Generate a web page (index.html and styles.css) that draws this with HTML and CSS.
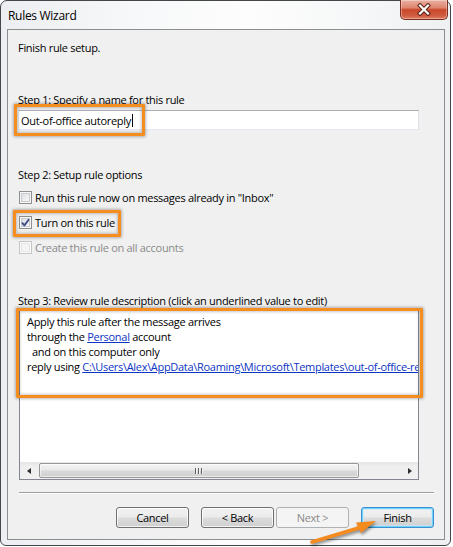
FILE: index.html
```html
<!DOCTYPE html>
<html>
<head>
<meta charset="utf-8">
<title>Rules Wizard</title>
<link rel="stylesheet" href="styles.css">
</head>
<body>
<div class="window">
  <div class="titlebar">
    <span class="title">Rules Wizard</span>
    <div class="close">
      <svg width="18" height="13" viewBox="0 0 18 13">
        <path d="M5 2.5 L13 10.5 M13 2.5 L5 10.5" stroke="#5b2418" stroke-width="4.2" stroke-linecap="square" fill="none"/>
        <path d="M5 2.5 L13 10.5 M13 2.5 L5 10.5" stroke="#ffffff" stroke-width="2.2" stroke-linecap="square" fill="none"/>
      </svg>
    </div>
  </div>
  <div class="client">
    <p class="intro">Finish rule setup.</p>

    <div class="label step1">Step 1: Specify a name for this rule</div>
    <div class="textbox">
      <span>Out-of-office autoreply</span><span class="caret"></span>
      <div class="hl hl-name"></div>
    </div>

    <div class="label step2">Step 2: Setup rule options</div>
    <div class="options">
      <div class="opt">
        <span class="cb"></span><span>Run this rule now on messages already in "Inbox"</span>
      </div>
      <div class="opt">
        <span class="cb checked">
          <svg width="11" height="11" viewBox="0 0 11 11"><path d="M2 5.6 L4.4 8.4 L9 2.2" stroke="#3d4f86" stroke-width="1.9" fill="none" stroke-linejoin="round"/></svg>
        </span><span>Turn on this rule</span>
        <div class="hl hl-turn"></div>
      </div>
      <div class="opt disabled">
        <span class="cb"></span><span>Create this rule on all accounts</span>
      </div>
    </div>

    <div class="label step3">Step 3: Review rule description (click an underlined value to edit)</div>
    <div class="desc">
      <div class="desc-text">
        <div>Apply this rule after the message arrives</div>
        <div>through the <span class="link">Personal</span> account</div>
        <div class="indent">and on this computer only</div>
        <div>reply using <span class="link">C:\Users\Alex\AppData\Roaming\Microsoft\Templates\out-of-office-reply.oft</span></div>
      </div>
      <div class="scrollbar">
        <div class="sb-btn"><span class="tri-left"></span></div>
        <div class="thumb"><span class="grip"><i></i><i></i><i></i></span></div>
        <div class="sb-track"></div>
        <div class="sb-btn right"><span class="tri-right"></span></div>
      </div>
      <div class="hl hl-desc"></div>
    </div>

    <div class="separator"></div>

    <div class="buttons">
      <div class="btn">Cancel</div>
      <div class="btn back">&lt; Back</div>
      <div class="btn next disabled">Next &gt;</div>
      <div class="btn finish default">Finish</div>
    </div>
  </div>
  <svg class="arrow" width="453" height="547" viewBox="0 0 453 547">
    <path d="M312 542 L362 527" stroke="#f58a1f" stroke-width="3.4" stroke-linecap="round" fill="none"/>
    <path d="M376 521 L356 522.5 L361 533 Z" fill="#f58a1f"/>
  </svg>
</div>
</body>
</html>
```

FILE: styles.css
```css
html, body {
  margin: 0;
  padding: 0;
}

body {
  width: 453px;
  height: 547px;
  overflow: hidden;
  background: #ffffff;
  font-family: "Open Sans", "Noto Sans", sans-serif;
  font-size: 11px;
  letter-spacing: -0.3px;
  color: #000000;
}

.window {
  position: relative;
  box-sizing: border-box;
  width: 451px;
  height: 546px;
  border: 1px solid #43474b;
  border-radius: 7px 7px 6px 6px;
  background: linear-gradient(90deg, #eceef1 0%, #f7f8f9 30%, #fdfdfd 55%, #f6f7f8 80%, #eef0f2 100%);
  display: flex;
  flex-direction: column;
}

.titlebar {
  position: relative;
  height: 28px;
  flex: none;
  display: flex;
  align-items: center;
  padding-left: 7px;
}

.title {
  font-size: 12px;
  line-height: 15px;
  margin-top: 1px;
}

.close {
  position: absolute;
  top: -1px;
  right: 2px;
  width: 48px;
  height: 20px;
  box-sizing: border-box;
  border: 1px solid #7b2c1f;
  border-top: none;
  border-radius: 0 0 5px 5px;
  background: linear-gradient(#eab0a2 0%, #df8670 40%, #c9472c 52%, #cf5a3e 80%, #e07a5c 100%);
  box-shadow: inset 0 0 0 1px rgba(255, 255, 255, 0.35);
  display: flex;
  align-items: center;
  justify-content: center;
}

.client {
  position: relative;
  flex: none;
  box-sizing: border-box;
  height: 511px;
  margin: 0 5px 5px 6px;
  border: 1px solid #8c8d8e;
  background: #f0f0f0;
  padding: 10px 0 0 10px;
  display: flex;
  flex-direction: column;
  line-height: 15px;
}

.intro {
  margin: 0;
}

.label.step1 {
  margin-top: 37px;
}

.label.step2 {
  margin-top: 37px;
}

.label.step3 {
  margin-top: 33px;
}

.textbox {
  position: relative;
  margin-top: 3px;
  box-sizing: border-box;
  width: 401px;
  height: 20px;
  border: 1px solid #abadb3;
  border-color: #abadb3 #dbdfe6 #e3e9ef #e2e3ea;
  background: #ffffff;
  padding-left: 2px;
  display: flex;
  align-items: center;
}

.caret {
  width: 1px;
  height: 13px;
  background: #000000;
  margin-left: 1px;
}

.options {
  margin-top: 3px;
  display: flex;
  flex-direction: column;
}

.opt {
  position: relative;
  height: 25px;
  display: flex;
  align-items: center;
}

.cb {
  position: relative;
  box-sizing: border-box;
  width: 13px;
  height: 13px;
  margin: 0 3px 0 1px;
  border: 1px solid #8e8f8f;
  background: linear-gradient(135deg, #d6d8db 0%, #eef0f2 60%, #fbfbfb 100%);
  box-shadow: inset 0 0 0 1px #f8f8f8, inset 0 0 0 2px #c8cbce;
}

.cb svg {
  position: absolute;
  left: 0;
  top: 0;
}

.opt.disabled {
  color: #8a8a8a;
}

.opt.disabled .cb {
  border-color: #c5c5c5;
  background: #f4f4f4;
  box-shadow: inset 0 0 0 1px #fafafa, inset 0 0 0 2px #e6e6e6;
}

.desc {
  position: relative;
  margin: 2px 0 0 1px;
  box-sizing: border-box;
  width: 400px;
  height: 170px;
  border: 1px solid #828790;
  background: #ffffff;
  display: flex;
  flex-direction: column;
}

.desc-text {
  flex: 1;
  padding: 3px 0 0 7px;
  overflow: hidden;
  white-space: nowrap;
}

.indent {
  padding-left: 5px;
}

.link {
  color: #0c35c4;
  text-decoration: underline;
}

.scrollbar {
  flex: none;
  height: 17px;
  display: flex;
  align-items: center;
  background: linear-gradient(#e4e4e4 0%, #eeeeee 25%, #f1f1f1 100%);
}

.sb-btn {
  width: 19px;
  height: 17px;
  display: flex;
  align-items: center;
  justify-content: center;
}

.sb-btn.right {
  width: 17px;
}

.tri-left {
  width: 0;
  height: 0;
  border-top: 3.5px solid transparent;
  border-bottom: 3.5px solid transparent;
  border-right: 4px solid #2e2e2e;
  margin-left: -2px;
}

.tri-right {
  width: 0;
  height: 0;
  border-top: 3.5px solid transparent;
  border-bottom: 3.5px solid transparent;
  border-left: 4px solid #2e2e2e;
  margin-left: 1px;
}

.thumb {
  box-sizing: border-box;
  width: 320px;
  height: 15px;
  border: 1px solid #979797;
  border-radius: 2px;
  background: linear-gradient(#f3f3f3 0%, #e9e9e9 45%, #d9d9d9 55%, #cfcfcf 100%);
  box-shadow: inset 0 0 0 1px rgba(255, 255, 255, 0.6);
  display: flex;
  align-items: center;
  justify-content: center;
}

.grip {
  display: flex;
  gap: 1px;
}

.grip i {
  display: block;
  width: 1px;
  height: 6px;
  background: #5e5e5e;
  box-shadow: 1px 0 0 #f4f4f4;
  margin-right: 1px;
}

.sb-track {
  flex: 1;
}

.separator {
  margin: 12px 0 0 1px;
  width: 415px;
  height: 0;
  border-top: 1px solid #a0a0a0;
  border-bottom: 1px solid #ffffff;
}

.buttons {
  margin-top: 13px;
  display: flex;
  justify-content: flex-end;
  padding-right: 10px;
}

.btn {
  box-sizing: border-box;
  width: 73px;
  height: 21px;
  border: 1px solid #707070;
  border-radius: 3px;
  background: linear-gradient(#f2f2f2 0%, #ebebeb 49%, #dddddd 51%, #cfcfcf 100%);
  box-shadow: inset 0 0 0 1px rgba(255, 255, 255, 0.75);
  display: flex;
  align-items: center;
  justify-content: center;
  line-height: 15px;
}

.btn.back {
  margin-left: 12px;
}

.btn.next {
  margin-left: 2px;
}

.btn.finish {
  margin-left: 12px;
}

.btn.disabled {
  border-color: #adb2b5;
  background: #f4f4f4;
  color: #8a8a8a;
  box-shadow: none;
}

.btn.default {
  border-color: #3c8fd0;
  box-shadow: inset 0 0 0 1px #6fd3fb, inset 0 0 0 2px rgba(190, 235, 252, 0.6);
}

.hl {
  position: absolute;
  box-sizing: border-box;
  border: 3px solid #f58d1f;
  border-radius: 1px;
  box-shadow: 0 0 3px 1px rgba(0, 0, 0, 0.28), inset 0 0 3px 1px rgba(0, 0, 0, 0.22);
  pointer-events: none;
}

.hl-name {
  left: -5px;
  top: -7px;
  width: 131px;
  height: 32px;
}

.hl-turn {
  left: -5px;
  top: 0;
  width: 108px;
  height: 27px;
}

.hl-desc {
  left: -4px;
  top: -3px;
  width: 407px;
  height: 90px;
}

.arrow {
  position: absolute;
  left: -1px;
  top: -1px;
  pointer-events: none;
  filter: drop-shadow(1px 2px 1.5px rgba(0, 0, 0, 0.45));
}
```
